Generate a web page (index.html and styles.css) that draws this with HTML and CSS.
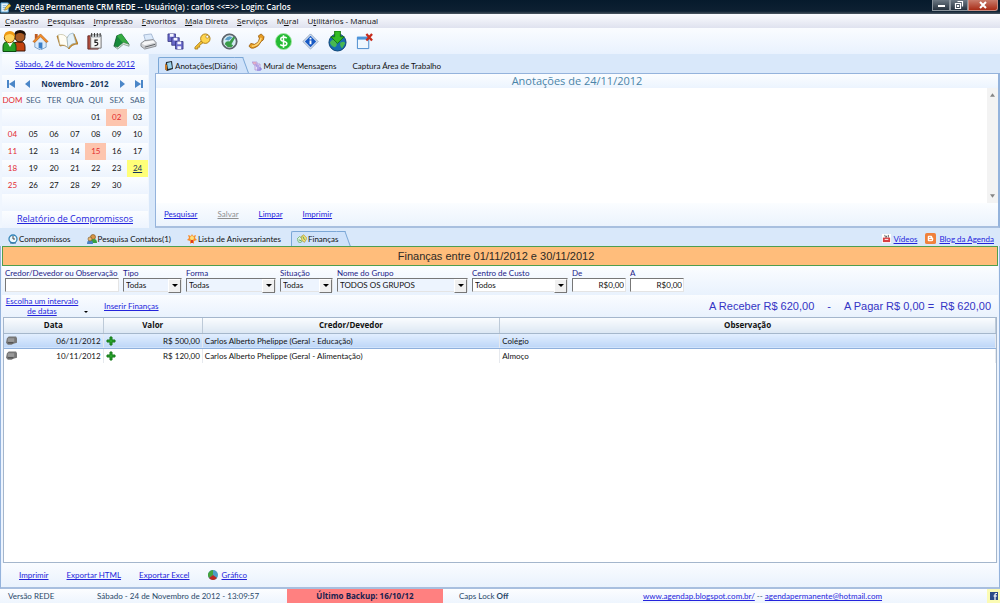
FILE: index.html
```html
<!DOCTYPE html>
<html lang="pt-BR">
<head>
    <meta charset="UTF-8">
    <meta name="viewport" content="width=device-width, initial-scale=1.0">
    <title>Agenda Permanente CRM REDE</title>
    <link rel="stylesheet" href="styles.css">
</head>
<body>
    <header class="titlebar">
        <svg class="app-icon" viewBox="0 0 12 12"><path d="M1 1h8v10H1z" fill="#e8f4fc" stroke="#4a9bd0"/><path d="M3 4h4M3 6h4M3 8h3" stroke="#7ab2d8"/><path d="M5 9l1-3 4-4 2 2-4 4z" fill="#f2c83a" stroke="#8b6a18" stroke-width=".6"/></svg>
        <h1>Agenda Permanente CRM REDE -- Usuário(a) : carlos &lt;&lt;=&gt;&gt; Login: Carlos</h1>
        <div class="window-buttons">
            <button class="win-btn" aria-label="Minimizar"><svg viewBox="0 0 12 10"><path d="M3 5h7v2H3z" fill="#fff"/></svg></button>
            <button class="win-btn" aria-label="Restaurar"><svg viewBox="0 0 12 10"><path d="M4.500 1.500h5v5M2.500 3.500h5v5h-5zM4.500 5.500h1v1h-1z" fill="none" stroke="#fff" stroke-width="1.200"/></svg></button>
            <button class="win-btn win-close" aria-label="Fechar"><svg viewBox="0 0 12 10"><path d="M3 2l6 6M9 2L3 8" stroke="#fff" stroke-width="2"/></svg></button>
        </div>
    </header>

    <nav class="menubar">
        <button><u>C</u>adastro</button>
        <button><u>P</u>esquisas</button>
        <button><u>I</u>mpressão</button>
        <button><u>F</u>avoritos</button>
        <button><u>M</u>ala Direta</button>
        <button><u>S</u>erviços</button>
        <button>M<u>u</u>ral</button>
        <button>U<u>t</u>ilitários - Manual</button>
    </nav>

    <div class="toolbar">
        <button class="tool-wide" aria-label="Contatos"><svg viewBox="0 0 24 22"><path d="M11 21v-5q0-4 4-4h4q4 0 4 5v4z" fill="#c4420e" stroke="#3a1706"/><circle cx="18" cy="7" r="5" fill="#a85a24" stroke="#2a1408"/><path d="M12 6q0-6 6-6t6 6q-2-3-6-3t-6 3z" fill="#1b0d05"/><path d="M1 21.500V17q0-5 4-5h5q4 0 4 5v4.500z" fill="#27a027" stroke="#0c4f10"/><path d="M5 12l3 5 3-5z" fill="#fff"/><circle cx="7.500" cy="7.500" r="5.200" fill="#ffd25c" stroke="#8a5204"/><path d="M2 7q0-6 6-6 5 0 5 6-3-3-5-3-3 0-6 3z" fill="#f09a12"/></svg></button>
        <button aria-label="Início"><svg viewBox="0 0 18 18"><path d="M3 9v6l6 3 6-3V8L9 3z" fill="#dcebfa" stroke="#6a93bd" stroke-width=".8"/><path d="M1 9l8-8 8 8-2 1-6-6-6 6z" fill="#f58d28" stroke="#b25e16" stroke-width=".7"/><path d="M7 10h4v7l-4-1z" fill="#3b7fc8"/><path d="M3 1h3v3L3 7z" fill="#bb5a22"/></svg></button>
        <button aria-label="Agenda"><svg class="wide-icon" viewBox="0 0 22 18"><path d="M1 4q6-2 9 3 3-5 8-5l4 10q-6 0-9 5-3-5-9-3z" fill="#d9962c" stroke="#9a6516" stroke-width=".7"/><path d="M2 3q6-2 9 3l1 10q-3-4-8-3z" fill="#fffdf4" stroke="#b7b08c" stroke-width=".6"/><path d="M11 6q2-5 6-5l3 10q-5 0-8 5z" fill="#e4f1fa" stroke="#8aa9c0" stroke-width=".6"/></svg></button>
        <button aria-label="Calendário"><svg viewBox="0 0 18 18"><path d="M2 3h11v14H2z" fill="#b04d3e" stroke="#692b24"/><path d="M5 2h11v14H5z" fill="#f5f5f5" stroke="#707070"/><path d="M5 2h11v3H5z" fill="#c2c8cc"/><path d="M6 0v4M9 0v4M12 0v4M15 0v4" stroke="#303030"/><path d="M12.500 7.500H9.500v2.500q3-.5 3 1.500t-3.500 2" fill="none" stroke="#222" stroke-width="1.200"/></svg></button>
        <button aria-label="Livro"><svg viewBox="0 0 18 18"><path d="M1 14L4 3l5-2 8 11-6-1-6 5z" fill="#168a3a" stroke="#075020" stroke-width=".8"/><path d="M4 3l5-2 8 11-6-1z" fill="#35ab42"/><path d="M1 14l4 1 6-5 6 2v2l-6-2-6 5z" fill="#e8efe8" stroke="#48745a" stroke-width=".6"/></svg></button>
        <button aria-label="Imprimir"><svg viewBox="0 0 18 18"><path d="M6 9L4 2l8-1 3 7z" fill="#dceafb" stroke="#8ba3c2" stroke-width=".7"/><path d="M1 11l4-3 9-1 3 3v4l-12 3-4-3z" fill="#cfd1d4" stroke="#73767b" stroke-width=".8"/><path d="M5 9l9-1 2 2-11 3-3-2z" fill="#f6f7f8"/><path d="M5 15l11-3" fill="none" stroke="#55585c"/></svg></button>
        <button aria-label="Salvar tudo"><svg viewBox="0 0 18 18"><g fill="#6868c8" stroke="#30307c" stroke-width=".8"><path d="M1 1h8v8H1z"/><path d="M5 5h8v8H5z"/><path d="M9 9h8v8H9z"/></g><path d="M3 1h4v3H3zM7 5h4v3H7zM11 9h4v3h-4zM11 14h4v3h-4z" fill="#f4f4ff"/></svg></button>
        <button aria-label="Senha"><svg viewBox="0 0 18 18"><path d="M8 8L1 15v2h3v-2h2v-2l4-3z" fill="#f2be32" stroke="#a27610" stroke-width=".8"/><circle cx="12" cy="6" r="5" fill="#ffd54e" stroke="#ae7d13"/><circle cx="14" cy="4" r="1.500" fill="#fff" stroke="#8f6a15" stroke-width=".6"/></svg></button>
        <button aria-label="Relógio"><svg viewBox="0 0 18 18"><circle cx="9" cy="9" r="8" fill="#707982" stroke="#444b52"/><circle cx="9" cy="9" r="6" fill="#cfe8f4" stroke="#eff"/><path d="M4 12q1-4 5-3l4-5 2 1-4 7 2 1-2 2q-4 1-7-3z" fill="#3a9c48"/><path d="M4 7q5-6 8-2L8 8z" fill="#5a9fc7"/></svg></button>
        <button aria-label="Telefone"><svg viewBox="0 0 18 18"><path d="M1 14l2-3 4 1q5-2 5-6l-1-3 3-2 3 3q0 4-3 5-3 6-8 7-3 1-5-2z" fill="#e59a22" stroke="#955908" stroke-width=".8"/><path d="M4 14q8-1 10-9" fill="none" stroke="#ffd878" stroke-width="1.500"/></svg></button>
        <button aria-label="Finanças"><svg viewBox="0 0 18 18"><circle cx="9" cy="9" r="8.500" fill="#24bb34" stroke="#a4e7a6"/><path d="M12.500 5.500Q9 3 6.500 5.200 5 8 9 8.800q5 1 3 3.800-3 2-6.500-.4M9 2.500v13" fill="none" stroke="#fff" stroke-width="1.600"/></svg></button>
        <button aria-label="Informações"><svg viewBox="0 0 18 18"><path d="M9 1l8 8-8 8-8-8z" fill="#d9e4f2" stroke="#8ba0bd"/><path d="M9 3l6 6-6 6-6-6z" fill="#1659c4"/><path d="M8 5h2v2H8zM8 8h2v4H8z" fill="#fff"/></svg></button>
        <button aria-label="Atualizar"><svg class="big-icon" viewBox="0 0 20 22"><circle cx="10" cy="12" r="9" fill="#176dae" stroke="#0b3f73"/><path d="M2 12q3-5 6-1t-1 6q-4-1-5-5zM13 12q5-2 5 1l-3 5q-3-2-2-6z" fill="#48b852"/><path d="M7 0h6v6h4l-7 7-7-7h4z" fill="#35bd27" stroke="#157313"/></svg></button>
        <button aria-label="Sair"><svg viewBox="0 0 18 18"><path d="M1.500 4.500h12v12h-12z" fill="#eef7ff" stroke="#4689cc"/><path d="M1 4h13v3H1z" fill="#4c94da"/><path d="M11 1l6 7M17 1l-6 7" stroke="#c62b1c" stroke-width="2.400"/></svg></button>
    </div>

    <div class="upper">
        <aside class="sidebar">
            <a class="today" href="#">Sábado, 24 de Novembro de 2012</a>
            <div class="month-nav">
                <button aria-label="Ano anterior"><svg viewBox="0 0 8 8"><path d="M0 0h2v8H0zM8 0v8L2 4z"/></svg></button>
                <button aria-label="Mês anterior"><svg viewBox="0 0 8 8"><path d="M6 0v8L1 4z"/></svg></button>
                <strong>Novembro - 2012</strong>
                <button aria-label="Próximo mês"><svg viewBox="0 0 8 8"><path d="M2 0v8l5-4z"/></svg></button>
                <button aria-label="Próximo ano"><svg viewBox="0 0 8 8"><path d="M6 0h2v8H6zM0 0v8l6-4z"/></svg></button>
            </div>
            <table class="calendar">
                <thead>
                    <tr><th>DOM</th><th>SEG</th><th>TER</th><th>QUA</th><th>QUI</th><th>SEX</th><th>SAB</th></tr>
                </thead>
                <tbody>
                    <tr><td></td><td></td><td></td><td></td><td>01</td><td class="holiday">02</td><td>03</td></tr>
                    <tr><td>04</td><td>05</td><td>06</td><td>07</td><td>08</td><td>09</td><td>10</td></tr>
                    <tr><td>11</td><td>12</td><td>13</td><td>14</td><td class="holiday">15</td><td>16</td><td>17</td></tr>
                    <tr><td>18</td><td>19</td><td>20</td><td>21</td><td>22</td><td>23</td><td class="selected">24</td></tr>
                    <tr><td>25</td><td>26</td><td>27</td><td>28</td><td>29</td><td>30</td><td></td></tr>
                    <tr><td></td><td></td><td></td><td></td><td></td><td></td><td></td></tr>
                </tbody>
            </table>
            <a class="report" href="#">Relatório de Compromissos</a>
        </aside>

        <section class="notes">
            <div class="tabs notes-tabs">
                <button class="tab active"><svg viewBox="0 0 10 10"><path d="M2 1l6-1 1 8-6 2-2-2z" fill="#202830"/><path d="M3 2l4-1 1 6-4 1z" fill="#9ad3ee"/><path d="M1 3v5l2 2V4z" fill="#c87824"/></svg>Anotações(Diário)</button>
                <button class="tab"><svg viewBox="0 0 10 10"><path d="M0 1h5v3H2zM3 3h5v6H3z" fill="#e7ddf6" stroke="#a98bd0" stroke-width=".7"/><path d="M4 5h3M5 7h4v2H5" fill="none" stroke="#7f72d8"/><path d="M1 2h3" stroke="#e38aa0"/></svg>Mural de Mensagens</button>
                <button class="tab">Captura Área de Trabalho</button>
            </div>
            <div class="notes-panel">
                <h2>Anotações de 24/11/2012</h2>
                <div class="notes-body">
                    <textarea aria-label="Anotações de 24/11/2012"></textarea>
                    <div class="scrollbar">
                        <button aria-label="Rolar para cima"><svg viewBox="0 0 6 4"><path d="M0 4l3-4 3 4z"/></svg></button>
                        <button aria-label="Rolar para baixo"><svg viewBox="0 0 6 4"><path d="M0 0l3 4 3-4z"/></svg></button>
                    </div>
                </div>
                <div class="notes-actions">
                    <a href="#">Pesquisar</a>
                    <a class="disabled" href="#">Salvar</a>
                    <a href="#">Limpar</a>
                    <a href="#">Imprimir</a>
                </div>
            </div>
        </section>
    </div>

    <div class="tabs main-tabs">
        <button class="tab"><svg viewBox="0 0 10 10"><circle cx="5" cy="5" r="4" fill="#eefaff" stroke="#3585b8" stroke-width="1.300"/><path d="M5 2v3h2" fill="none" stroke="#444"/><path d="M2 9h6" stroke="#2b6d9c"/></svg>Compromissos</button>
        <button class="tab"><svg viewBox="0 0 10 10"><circle cx="6" cy="3" r="2.500" fill="#d99545" stroke="#74501f" stroke-width=".6"/><path d="M3 9q0-4 4-4 3 0 3 4z" fill="#38a03e"/><path d="M0 10q0-4 3-4t3 4z" fill="#4b82c4"/><circle cx="3" cy="5" r="2" fill="#e7b774" stroke="#74501f" stroke-width=".6"/></svg>Pesquisa Contatos(1)</button>
        <button class="tab"><svg viewBox="0 0 10 10"><path d="M5 0l1 2 3-1-1 3 2 2-3 1v3L5 8l-2 2V7L0 6l2-2-1-3 3 1z" fill="#f78e2e"/><circle cx="5" cy="4" r="2" fill="#ffe17b"/><path d="M4 6h2v3H4z" fill="#dd3b27"/></svg>Lista de Aniversariantes</button>
        <button class="tab active"><svg viewBox="0 0 12 10"><path d="M0 5l3-3 4 3-2 4H2z" fill="#dff3d7" stroke="#56a65a" stroke-width=".8"/><path d="M5 2l3-2 4 4-3 5-3-2z" fill="#f3df74" stroke="#a59737" stroke-width=".8"/><path d="M2 6l3 1M7 2l2 4" stroke="#3f9259"/></svg>Finanças</button>
        <div class="site-links">
            <a href="#"><svg viewBox="0 0 10 10"><path d="M0 0h10v10H0z" fill="#fff"/><path d="M3 1l1 3M7 1v3M5 2v2" stroke="#555"/><path d="M1 4h8v5H1z" fill="#d93e43"/><path d="M3 6h4" stroke="#fff"/></svg><span>Vídeos</span></a>
            <a href="#"><svg class="blogger" viewBox="0 0 12 12"><rect width="12" height="12" rx="2" fill="#f0813c"/><path d="M4 3h3q1 0 1 2 1 0 1 1v1q0 2-2 2H4Q3 9 3 8V4q0-1 1-1z" fill="#fff"/><path d="M4.500 4.800H6M4.500 7.200h3" stroke="#f0813c"/></svg><span>Blog da Agenda</span></a>
        </div>
    </div>

    <main class="finance">
        <h2 class="banner">Finanças entre 01/11/2012 e 30/11/2012</h2>

        <form class="filters">
            <div class="field field-name"><label for="credor">Credor/Devedor ou Observação</label><input id="credor" type="text"></div>
            <div class="field field-small"><label for="tipo">Tipo</label><div class="combo"><select id="tipo"><option>Todas</option></select></div></div>
            <div class="field field-medium"><label for="forma">Forma</label><div class="combo"><select id="forma"><option>Todas</option></select></div></div>
            <div class="field field-tiny"><label for="situacao">Situação</label><div class="combo"><select id="situacao"><option>Todas</option></select></div></div>
            <div class="field field-large"><label for="grupo">Nome do Grupo</label><div class="combo"><select id="grupo"><option>TODOS OS GRUPOS</option></select></div></div>
            <div class="field field-cost"><label for="custo">Centro de Custo</label><div class="combo combo-white"><select id="custo"><option>Todos</option></select></div></div>
            <div class="field field-money"><label for="de">De</label><input id="de" type="text" value="R$0,00"></div>
            <div class="field field-money"><label for="a">A</label><input id="a" type="text" value="R$0,00"></div>
        </form>

        <div class="summary">
            <a class="interval" href="#">Escolha um intervalo de datas</a>
            <button class="drop" aria-label="Abrir intervalos"><svg viewBox="0 0 4 2"><path d="M0 0h4L2 2z"/></svg></button>
            <a href="#">Inserir Finanças</a>
            <p class="totals"><span>A Receber R$ 620,00</span><span>-</span><span>A Pagar R$ 0,00 =&nbsp; R$ 620,00</span></p>
        </div>

        <div class="grid-box">
            <table class="grid">
                <colgroup><col class="col-date"><col class="col-value"><col class="col-creditor"><col></colgroup>
                <thead>
                    <tr><th>Data</th><th>Valor</th><th>Credor/Devedor</th><th>Observação</th></tr>
                </thead>
                <tbody>
                    <tr class="current">
                        <td><div class="cell"><svg viewBox="0 0 12 9"><path d="M1 2l2-2h8l1 2v5l-4 1-2 1H2L0 7z" fill="#777"/><path d="M2 2h7v4H2z" fill="#999"/><path d="M2 7h6" stroke="#444"/></svg>06/11/2012</div></td>
                        <td><div class="cell"><svg class="plus" viewBox="0 0 10 10"><path d="M4 1h2v3h3v2H6v3H4V6H1V4h3z" fill="#29a62b" stroke="#16791b"/></svg>R$ 500,00</div></td>
                        <td>Carlos Alberto Phelippe (Geral - Educação)</td>
                        <td>Colégio</td>
                    </tr>
                    <tr>
                        <td><div class="cell"><svg viewBox="0 0 12 9"><path d="M1 2l2-2h8l1 2v5l-4 1-2 1H2L0 7z" fill="#777"/><path d="M2 2h7v4H2z" fill="#999"/><path d="M2 7h6" stroke="#444"/></svg>10/11/2012</div></td>
                        <td><div class="cell"><svg class="plus" viewBox="0 0 10 10"><path d="M4 1h2v3h3v2H6v3H4V6H1V4h3z" fill="#29a62b" stroke="#16791b"/></svg>R$ 120,00</div></td>
                        <td>Carlos Alberto Phelippe (Geral - Alimentação)</td>
                        <td>Almoço</td>
                    </tr>
                </tbody>
            </table>
        </div>

        <div class="finance-actions">
            <a href="#">Imprimir</a>
            <a href="#">Exportar HTML</a>
            <a href="#">Exportar Excel</a>
            <a class="chart-link" href="#"><svg viewBox="0 0 10 10"><circle cx="5" cy="5" r="5" fill="#4a9dc4"/><path d="M5 5V0a5 5 0 0 0-4 8z" fill="#45a33d"/><path d="M5 5L1 8a5 5 0 0 0 8 0z" fill="#bb2821"/></svg><span>Gráfico</span></a>
        </div>
    </main>

    <footer class="statusbar">
        <span class="version">Versão REDE</span>
        <span class="clock">Sábado - 24 de Novembro de 2012 - 13:09:57</span>
        <strong class="backup">Último Backup: 16/10/12</strong>
        <span class="caps">Caps Lock <b>Off</b></span>
        <span class="contact"><a href="#">www.agendap.blogspot.com.br/</a> -- <a href="#">agendapermanente@hotmail.com</a></span>
        <a class="facebook" href="#" aria-label="Facebook"><svg viewBox="0 0 8 8"><path d="M0 0h8v8H0z" fill="#2c4a88"/><path d="M7 1.500H6q-1 0-1 1V8M3.500 4H7" fill="none" stroke="#fff" stroke-width="1.200"/></svg></a>
    </footer>
</body>
</html>
```
FILE: styles.css
```css
* {
    box-sizing: border-box;
}

body {
    margin: 0;
    min-height: 100vh;
    display: flex;
    flex-direction: column;
    background: #d9e8fa;
    color: #111;
    font-family: Lato, "Liberation Sans", Arial, sans-serif;
    font-size: 8px;
    line-height: 10px;
}

button {
    padding: 0;
    border: none;
    background: none;
    color: inherit;
    font: inherit;
}

a {
    color: #2424dc;
}

h1, h2, p {
    margin: 0;
    font-weight: normal;
}

svg {
    display: block;
    flex: none;
}

/* barra de título */
.titlebar {
    display: flex;
    align-items: center;
    gap: 4px;
    height: 14px;
    background: linear-gradient(#061a2c, #0d2032 80%, #4b5661);
    color: #fff;
}

.app-icon {
    width: 11px;
    height: 11px;
}

.titlebar h1 {
    font-family: "Open Sans", sans-serif;
    font-size: 8px;
    font-weight: 600;
}

.window-buttons {
    display: flex;
    align-self: flex-start;
    margin-left: auto;
    margin-right: 2px;
}

.win-btn {
    width: 18px;
    height: 11px;
    border: 1px solid #8b949c;
    border-top: none;
    background: linear-gradient(#6c7883, #26323e);
}

.win-btn svg {
    width: 12px;
    height: 10px;
    margin: 0 auto;
}

.win-close {
    width: 30px;
    border-color: #c98c80;
    border-radius: 0 0 3px 0;
    background: linear-gradient(#c97c6c, #a92c17);
}

.menubar {
    display: flex;
    gap: 9px;
    height: 14px;
    padding: 0 5px;
    background: linear-gradient(#fafbfe, #dfe2ef);
    font-family: "Open Sans", sans-serif;
}

.toolbar {
    display: flex;
    align-items: center;
    gap: 9px;
    height: 26px;
    padding: 0 2px;
    background: linear-gradient(#fafcff, #e9f2fe);
}

.toolbar button {
    display: flex;
    justify-content: center;
    width: 18px;
}

.toolbar svg {
    width: 17px;
    height: 17px;
}

.toolbar .wide-icon {
    width: 22px;
    height: 18px;
}

.toolbar .big-icon {
    width: 19px;
    height: 21px;
}

.toolbar .tool-wide {
    width: 20px;
    justify-content: flex-start;
}

.toolbar .tool-wide svg {
    width: 24px;
    height: 22px;
}

/* calendário */
.upper {
    display: flex;
    gap: 6px;
    height: 174px;
}

.sidebar {
    display: flex;
    flex-direction: column;
    width: 149px;
    padding: 0 1px 0 2px;
    background: #f0f6fe;
    text-align: center;
}

.today {
    height: 21px;
    line-height: 21px;
    background: linear-gradient(#fbfdff, #edf4fe);
}

.month-nav {
    display: flex;
    align-items: center;
    justify-content: space-between;
    height: 17px;
    padding: 0 5px;
    background: linear-gradient(#fbfdff, #edf4fe);
    color: #17375e;
    font-family: "Open Sans", sans-serif;
}

.month-nav svg {
    width: 8px;
    height: 8px;
    fill: #4a86c8;
}

.calendar {
    width: 100%;
    table-layout: fixed;
    border-collapse: collapse;
}

.calendar tr {
    height: 17px;
    background: linear-gradient(#fbfdff, #edf4fe);
}

.calendar th, .calendar td {
    padding: 0 0 1px;
}

.calendar th {
    color: #44607f;
    font-weight: normal;
}

.calendar th:first-child, .calendar td:first-child, .calendar .holiday {
    color: #e32a30;
}

.calendar .holiday {
    background: #fdc5ae;
}

.calendar .selected {
    background: #ffff78;
    color: #17375e;
    text-decoration: underline;
}

.report {
    flex: 1;
    line-height: 15px;
    background: linear-gradient(#fbfdff, #edf4fe);
    font-family: "Open Sans", sans-serif;
    font-size: 9px;
}

/* abas */
.tabs {
    display: flex;
    align-items: stretch;
}

.tab {
    position: relative;
    display: flex;
    align-items: center;
    gap: 1px;
    padding: 0 5px;
    border: 1px solid transparent;
    border-bottom: none;
}

.tab svg {
    width: 10px;
    height: 10px;
}

.tab.active {
    border-color: #7ba7d6;
    border-right: none;
    border-radius: 2px 0 0 0;
    background: #cfe2fa;
}

/* lado inclinado da aba ativa */
.tab.active::after {
    content: "";
    position: absolute;
    top: -1px;
    right: -4px;
    bottom: 0;
    width: 8px;
    border-top: 1px solid #7ba7d6;
    border-right: 1px solid #7ba7d6;
    background: #cfe2fa;
    transform: skewX(20deg);
}

.notes {
    flex: 1;
    display: flex;
    flex-direction: column;
}

.notes-tabs {
    gap: 4px;
    height: 19px;
    padding: 3px 0 0 3px;
}

.notes-panel {
    flex: 1;
    display: flex;
    flex-direction: column;
    border: 1px solid #94b3dc;
    border-right-width: 2px;
    border-bottom: 2px solid #a8bfdf;
    background: #fff;
}

.notes-panel h2 {
    height: 14px;
    background: linear-gradient(#fbfdff, #ecf4fe);
    color: #4a84a8;
    font-family: "Open Sans", sans-serif;
    font-size: 11px;
    line-height: 14px;
    text-align: center;
}

.notes-body {
    flex: 1;
    display: flex;
}

.notes-body textarea {
    flex: 1;
    border: none;
    resize: none;
    outline: none;
    font: inherit;
}

.scrollbar {
    display: flex;
    flex-direction: column;
    justify-content: space-between;
    width: 11px;
    padding: 5px 3px;
    background: #f3f3f3;
}

.scrollbar svg {
    width: 5px;
    height: 4px;
    fill: #858585;
}

.notes-actions {
    display: flex;
    gap: 20px;
    height: 23px;
    padding: 6px 8px;
    background: linear-gradient(#fbfdff, #ebf3fd);
}

.notes-actions .disabled {
    color: #909090;
}

.main-tabs {
    gap: 4px;
    height: 18px;
    padding: 3px 6px 0 2px;
}

.site-links {
    display: flex;
    gap: 8px;
    margin-left: auto;
}

.site-links a {
    display: flex;
    align-items: center;
    gap: 3px;
}

.site-links svg {
    width: 9px;
    height: 9px;
}

.site-links .blogger {
    width: 11px;
    height: 11px;
}

/* finanças */
.finance {
    flex: 1;
    display: flex;
    flex-direction: column;
    padding: 0 1px;
    border: 1px solid #94b3dc;
    border-top: none;
    border-bottom: 2px solid #a8bfdf;
    background: #edf4fe;
}

.banner {
    height: 20px;
    padding-right: 8px;
    border: 1px solid #4f9e4f;
    background: #ffbd7b;
    color: #2e2a26;
    font-family: "Liberation Sans", Arial, sans-serif;
    font-size: 11px;
    line-height: 18px;
    text-align: center;
}

.filters {
    display: flex;
    gap: 4px;
    height: 29px;
    padding: 2px 3px 0;
    background: linear-gradient(#fbfdff, #e9f2fd);
    color: #222288;
}

.field label {
    display: block;
    height: 10px;
    white-space: nowrap;
}

.field input, .combo {
    width: 100%;
    height: 14px;
    border: 1px solid #e4e4e4;
    border-top: 1px solid #777;
    border-left: 1px solid #777;
}

.field input {
    display: block;
    padding: 0 1px;
    background: #fff;
    color: #111;
    font: inherit;
}

.field-name { width: 114px; }
.field-small { width: 59px; }
.field-medium { width: 90px; }
.field-tiny { width: 53px; }
.field-large { width: 131px; }
.field-cost { width: 96px; }
.field-money { width: 54px; }

.field-money input {
    text-align: right;
}

.combo {
    position: relative;
    background: #edf4fe;
}

.combo-white {
    background: #fff;
}

.combo select {
    display: block;
    width: 100%;
    height: 12px;
    padding: 0 12px 0 2px;
    border: none;
    background: none;
    color: #111;
    font: inherit;
    appearance: none;
}

.combo::before {
    content: "";
    position: absolute;
    top: 0;
    right: 0;
    width: 11px;
    height: 12px;
    border: 1px solid #fff;
    border-right-color: #777;
    border-bottom-color: #777;
    background: #f0f0f0;
    pointer-events: none;
}

.combo::after {
    content: "";
    position: absolute;
    top: 5px;
    right: 3px;
    border: 3px solid transparent;
    border-top-color: #000;
    border-bottom: none;
    pointer-events: none;
}

.summary {
    display: flex;
    align-items: center;
    height: 22px;
    padding: 0 7px 0 3px;
    background: linear-gradient(#fafcff, #e9f2fd);
}

.interval {
    width: 74px;
    text-align: center;
}

.drop {
    align-self: flex-end;
    margin: 0 16px 4px 5px;
}

.drop svg {
    width: 4px;
    height: 2px;
}

.totals {
    display: flex;
    gap: 13px;
    margin-left: auto;
    color: #3434c4;
    font-family: "Liberation Sans", Arial, sans-serif;
    font-size: 11px;
}

.grid-box {
    flex: 1;
    margin: 0 1px;
    border: 1px solid #a4b6cc;
    background: #fff;
}

.grid {
    width: 100%;
    table-layout: fixed;
    border-collapse: collapse;
}

.col-date { width: 10%; }
.col-value { width: 10%; }
.col-creditor { width: 30%; }

.grid th {
    height: 15px;
    padding: 0;
    border-right: 1px solid #bdcad8;
    border-bottom: 1px solid #a5b7cb;
    background: linear-gradient(#fafcfe, #dce7f3);
    font-family: "Open Sans", sans-serif;
}

.grid td {
    height: 15px;
    padding: 0 2px;
    border-right: 1px solid #e6e9ee;
}

.grid .current td {
    border-bottom: 1px solid #8fb0dc;
    background: linear-gradient(#e3efff, #bdd6f8);
}

.cell {
    display: flex;
    align-items: center;
    justify-content: space-between;
}

.cell svg {
    width: 11px;
    height: 9px;
}

.cell .plus {
    width: 10px;
    height: 10px;
}

.finance-actions {
    display: flex;
    align-items: center;
    height: 24px;
    padding: 0 17px;
    gap: 18px;
    background: linear-gradient(#fafcff, #e9f2fd);
}

.chart-link {
    display: flex;
    align-items: center;
    gap: 4px;
}

.chart-link svg {
    width: 10px;
    height: 10px;
}

.statusbar {
    display: grid;
    grid-template-columns: 97fr 190fr 156fr 200fr 344fr 13px;
    align-items: center;
    height: 14px;
    background: linear-gradient(#fcfdff, #eef5fe);
    color: #2a4868;
}

.version {
    padding-left: 8px;
}

.backup {
    background: #ff8080;
    color: #17204e;
    font-family: "Open Sans", sans-serif;
    line-height: 14px;
    text-align: center;
}

.caps {
    padding-left: 16px;
}

.facebook {
    display: flex;
    align-items: center;
    justify-content: center;
    height: 14px;
    background: #fbfbb4;
}

.facebook svg {
    width: 8px;
    height: 8px;
}
```
